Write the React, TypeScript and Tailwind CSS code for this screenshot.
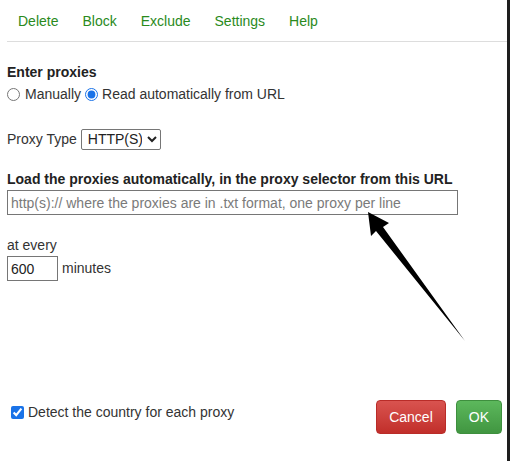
import React from "react";

const navItems = ["Delete", "Block", "Exclude", "Settings", "Help"];

export default function App() {
  return (
    <div className="flex w-[510px] h-[461px] bg-white font-['Liberation_Sans',Arial,sans-serif] text-[14px] text-[#333]">
      <div className="relative flex flex-col w-[507px] h-full bg-white">
        {/* Top menu */}
        <nav className="ml-[7px] h-[42px] flex items-center pl-[11px] gap-[24px] border-b border-[#dddddd]">
          {navItems.map((item) => (
            <a key={item} href="#" className="text-[14px] text-[#2a8a1c] leading-none">
              {item}
            </a>
          ))}
        </nav>

        <div className="flex flex-col flex-1 pl-[7px]">
          <div className="mt-[21px] font-bold leading-[18px] text-[#222]">Enter proxies</div>
          <div className="mt-[3px] h-[20px] flex items-center">
            <input type="radio" name="mode" className="m-0 w-[13px] h-[13px] accent-[#1a73e8]" />
            <span className="ml-[5px]">Manually</span>
            <input type="radio" name="mode" defaultChecked className="ml-[4px] w-[13px] h-[13px] accent-[#1a73e8]" />
            <span className="ml-[4px]">Read automatically from URL</span>
          </div>

          <div className="mt-[25px] h-[20px] flex items-center">
            <span>Proxy Type</span>
            <select className="ml-[4px] h-[21px] w-[80px] border border-[#767676] rounded-[2px] px-[2px] text-[14px] text-[#222] bg-white">
              <option>HTTP(S)</option>
            </select>
          </div>

          <div className="mt-[21px] font-bold leading-[18px] text-[#222]">
            Load the proxies automatically, in the proxy selector from this URL
          </div>
          <input
            type="text"
            placeholder="http(s):// where the proxies are in .txt format, one proxy per line"
            className="mt-[2px] h-[25px] w-[451px] border border-[#767676] px-[3px] text-[14px] placeholder:text-[#7a7a7a] outline-none"
          />

          <div className="mt-[21px] leading-[18px]">at every</div>
          <div className="mt-[2px] flex items-center">
            <input
              type="text"
              defaultValue="600"
              className="h-[25px] w-[51px] border border-[#767676] px-[3px] text-[14px] text-[#222] outline-none"
            />
            <span className="ml-[4px]">minutes</span>
          </div>

          {/* Footer */}
          <div className="mt-auto mb-[27px] flex items-start justify-between pr-[5px]">
            <label className="mt-[3px] ml-[4px] h-[18px] flex items-center">
              <input type="checkbox" defaultChecked className="m-0 w-[13px] h-[13px] accent-[#1a73e8]" />
              <span className="ml-[4px]">Detect the country for each proxy</span>
            </label>
            <div className="flex gap-[10px]">
              <button className="h-[34px] px-[12px] rounded-[4px] border border-[#b92c28] bg-gradient-to-b from-[#d9534f] to-[#c12e2a] text-white text-[14px]">
                Cancel
              </button>
              <button className="h-[34px] px-[12px] rounded-[4px] border border-[#3e8f3e] bg-gradient-to-b from-[#5cb85c] to-[#419641] text-white text-[14px]">
                OK
              </button>
            </div>
          </div>
        </div>

        {/* Annotation arrow */}
        <svg className="absolute left-0 top-0 pointer-events-none" width="507" height="461">
          <polygon points="368,212 389,223 383,227 465,341 376,231 371,236" fill="#000" />
        </svg>
      </div>
      <div className="w-[3px] h-full bg-[#1e1e1e]" />
    </div>
  );
}
